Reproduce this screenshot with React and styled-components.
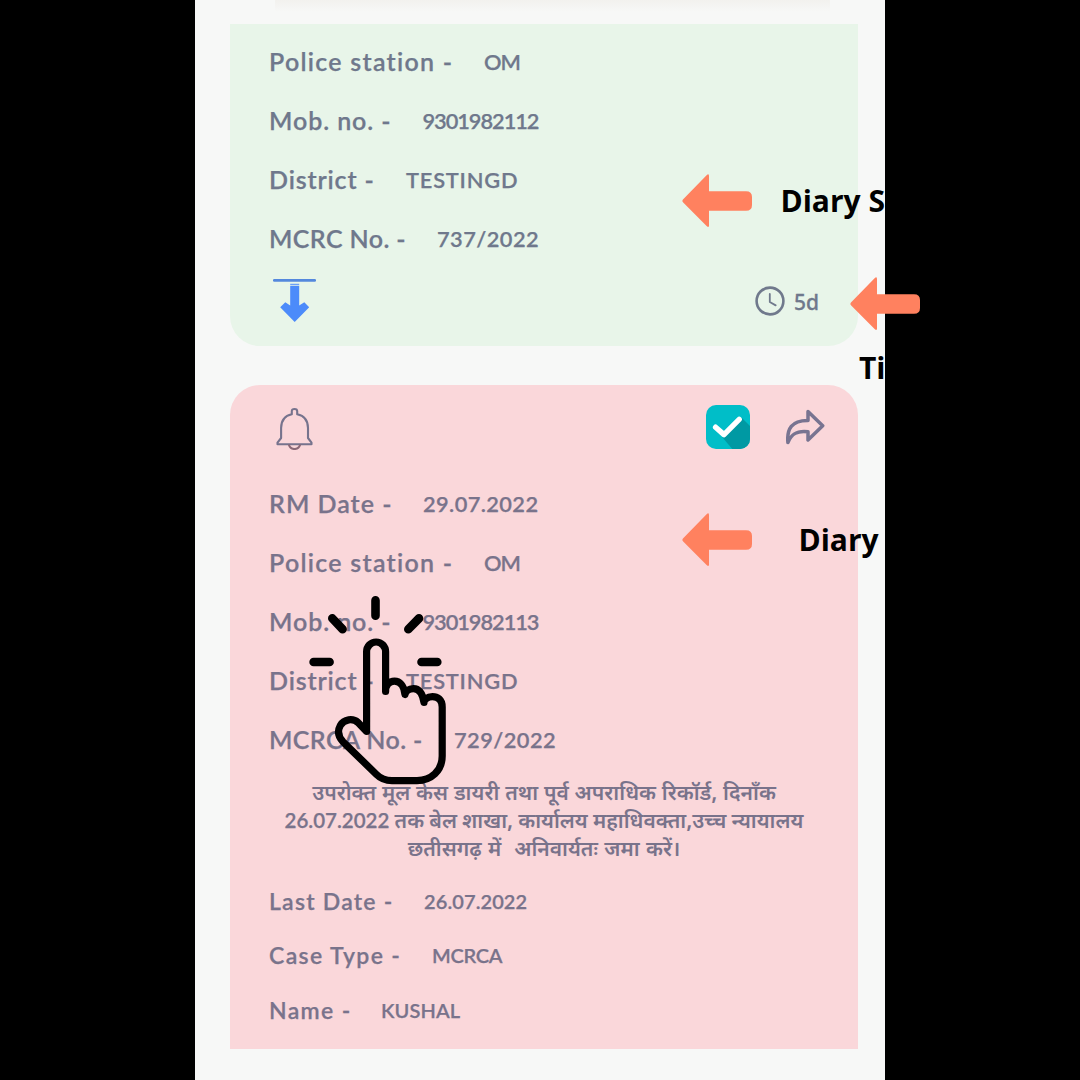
import React from "react";
import styled, { createGlobalStyle } from "styled-components";

const Global = createGlobalStyle`
  *, *::before, *::after { box-sizing: border-box; }
  html, body { margin: 0; background: #000; }
`;

const Stage = styled.div`
  position: relative;
  width: 1080px;
  height: 1080px;
  overflow: hidden;
  background: #000;
  display: flex;
  justify-content: center;
`;

const Phone = styled.main`
  position: relative;
  width: 690px;
  height: 1080px;
  overflow: hidden;
  background: #f7f8f7;
  padding: 0 27px 0 35px;
  display: flex;
  flex-direction: column;
  font-family: Lato, "Noto Sans", sans-serif;
  color: #73758f;
`;

const TopShade = styled.div`
  height: 12px;
  margin: 0 28px 12px 45px;
  flex: none;
  background: linear-gradient(#f2f1ee, #f7f8f7);
`;

const Card = styled.section`
  flex: none;
  height: ${(p) => p.$height}px;
  background: ${(p) => p.$bg};
  border-radius: ${(p) => p.$radius};
  padding: ${(p) => p.$pad};
  color: ${(p) => p.$ink};
  & + & { margin-top: 39px; }
`;

const Field = styled.div`
  display: flex;
  align-items: flex-start;
  height: ${(p) => (p.$small ? 54.4 : 59)}px;
  line-height: ${(p) => (p.$small ? 54.4 : 59)}px;
  white-space: pre;
`;

const Label = styled.span`
  width: ${(p) => p.$width}px;
  flex: none;
  font-size: ${(p) => (p.$small ? 23 : 25)}px;
  font-weight: 600;
  letter-spacing: ${(p) => p.$track}px;
  -webkit-text-stroke: 0.25px currentColor;
`;

const Value = styled.span`
  font-size: ${(p) => (p.$small ? 20 : 21.8)}px;
  font-weight: 600;
  letter-spacing: ${(p) => p.$track}px;
  -webkit-text-stroke: 0.25px currentColor;
`;

const CardHead = styled.header`
  height: 89px;
  padding: 0 33px 4px 7px;
  display: flex;
  align-items: center;
`;

const Actions = styled.div`
  margin-left: auto;
  display: flex;
  align-items: center;
  gap: 36px;
  padding-bottom: 1px;
`;

const CardFoot = styled.footer`
  height: 66px;
  padding: 0 39px 0 4px;
  display: flex;
  align-items: center;
  justify-content: space-between;
`;

const Age = styled.div`
  display: flex;
  align-items: center;
  gap: 9px;
  font: 500 21px/32px "Noto Sans", sans-serif;
`;

const AgeText = styled.span`
  padding-top: 2px;
  -webkit-text-stroke: 0.3px currentColor;
`;

const Notice = styled.p`
  margin: 12px 0 9px;
  padding-right: 39px;
  height: 84px;
  text-align: center;
  white-space: pre;
  font: 600 21px/28px "Noto Sans Devanagari", "Noto Sans", Lato, sans-serif;
`;

const NoticeLine = styled.span`
  display: block;
  height: 28px;
  word-spacing: ${(p) => p.$space}px;
`;

const NoticeDate = styled.span`
  font: 600 20.5px/20px Lato, sans-serif;
  -webkit-text-stroke: 0.25px currentColor;
`;

const Caption = styled.span`
  position: absolute;
  left: ${(p) => p.$x}px;
  top: ${(p) => p.$y}px;
  font: 700 30px/40px "Open Sans", sans-serif;
  white-space: pre;
  color: #000;
`;

const ArrowMark = styled.svg`
  position: absolute;
  left: ${(p) => p.$x}px;
  top: ${(p) => p.$y}px;
  width: 71px;
  height: 54px;
`;

const HandMark = styled.svg`
  position: absolute;
  left: 300px;
  top: 590px;
  width: 160px;
  height: 200px;
`;

const Arrow = ({ x, y }) => (
  <ArrowMark $x={x} $y={y} viewBox="0 0 71 54">
    <path
      fill="#ff815f"
      d="M1.2 25.2 24.6 1.2Q27 -.8 27 2V17.2H64Q70 17.2 70 23V31Q70 36.8 64 36.8H27V51.5Q27 54.1 24.6 52.1L1.2 28.6Q-.4 26.9 1.2 25.2Z"
    />
  </ArrowMark>
);

const Hand = () => (
  <HandMark viewBox="0 0 160 200" fill="none" stroke="#000" strokeLinecap="round" strokeLinejoin="round">
    <g strokeWidth="8.6">
      <path d="M75.5 10.4V25.8M32.3 28.4 42.6 39.2M119 28.4 108.3 39.2M13.6 72H29.6M121.5 72H137.3" />
    </g>
    <path
      strokeWidth="7.2"
      d="M85.6 101.5V61.8A9.5 9.8 0 0 0 66.6 61.8V141.5L58 132.5C53 128 44 129 40.3 135.5C37 141.5 38.8 147.3 43 151.8L76.5 184.5Q82.5 190.6 92 190.6H117C131 190.6 142.2 181 142.2 166V117C142.2 109 137 106.6 132.5 106.6C127 106.6 124 110 124 112.5C122.5 103 119 98.6 113.5 98.6C108.5 98.6 105.5 101.5 105 104.5C104 95 99.5 91.2 94.5 91.2C89.5 91.2 85.6 94.5 85.6 101.5"
    />
  </HandMark>
);

const Download = () => (
  <svg width="43" height="46" viewBox="0 0 43 46">
    <rect x="0" y="1" width="43" height="2.8" rx="1.3" fill="#5488dd" />
    <rect x="17.2" y="5.8" width="9" height="1" fill="#4c8bfa" />
    <path fill="#4c8bfa" d="M17.2 7.8H26.2V27.4L31.3 24.2 36.2 29.3 21.7 44 7.2 29.3 12.3 24.2 17.2 27.4Z" />
  </svg>
);

const Clock = () => (
  <svg width="30" height="30" viewBox="0 0 30 30" fill="none" stroke="#70798c" strokeLinecap="round" strokeLinejoin="round">
    <circle cx="15" cy="15" r="13.4" strokeWidth="2.6" />
    <path d="M14.8 8V16L20.7 19.4" strokeWidth="1.8" />
  </svg>
);

const Bell = () => (
  <svg width="38" height="45" viewBox="0 -2 38 45" fill="none" stroke="#76738d" strokeWidth="2.1" strokeLinejoin="round">
    <path d="M15.8 7.2V4.3Q15.8 2 18.5 2Q21.2 2 21.2 4.3V7.2C28.4 8.7 32 14 32 21V31L35.5 35.7V37.3H1.5V35.7L5.1 31V21C5.1 14 8.6 8.7 15.8 7.2Z" />
    <path d="M12.8 37.5Q14.2 42 18.5 42T24.2 37.5" stroke="#8a6876" />
  </svg>
);

const Check = () => (
  <svg width="44" height="44" viewBox="0 0 44 44">
    <defs>
      <clipPath id="tile"><rect width="44" height="44" rx="10" /></clipPath>
    </defs>
    <g clipPath="url(#tile)">
      <rect width="44" height="44" fill="#00bec8" />
      <path d="M36 13 46 23V46H28L16.5 32.5Z" fill="#0099a3" />
    </g>
    <path d="M9.6 22.2 18 29.6 33.2 14.4" fill="none" stroke="#fff" strokeWidth="5.4" strokeLinecap="round" strokeLinejoin="round" />
  </svg>
);

const Share = () => (
  <svg width="39" height="36" viewBox="0.5 0 39 36" fill="none" stroke="#787491" strokeWidth="3.5" strokeLinejoin="round">
    <path d="M22.5 2.5 37.2 16.8 22.5 31V22.8C12 21.5 6 24.5 2.4 33.5C1.2 20 6 11.2 22.5 11.4Z" />
  </svg>
);

const Row = ({ f: [label, width, lt, value, vt], small }) => (
  <Field $small={small}>
    <Label $small={small} $width={width} $track={lt}>{label}</Label>
    <Value $small={small} $track={vt}>{value}</Value>
  </Field>
);

// label, value column offset, label tracking, value, value tracking
const caseRows = [
  ["Police station -", 215, 1.27, "OM", -1],
  ["Mob. no. -", 153.5, 0.92, "9301982112", -1.05],
  ["District -", 137, 0.85, "TESTINGD", 0.8],
];
const greenRows = [...caseRows, ["MCRC No. -", 168, 0.4, "737/2022", 0.45]];
const pinkRows = [
  ["RM Date -", 154, 1, "29.07.2022", 0.4],
  caseRows[0],
  ["Mob. no. -", 153.5, 0.92, "9301982113", -1.05],
  caseRows[2],
  ["MCRCA No. -", 185, 0.4, "729/2022", 0.45],
];
const detailRows = [
  ["Last Date -", 155, 1.22, "26.07.2022", 0.1],
  ["Case Type -", 163, 1.35, "MCRCA", -0.3],
  ["Name -", 112, 1.35, "KUSHAL", 0.1],
];

export default function App() {
  return (
    <Stage>
      <Global />
      <Phone>
        <TopShade />
        <Card $height={322} $bg="#e8f5e9" $radius="0 0 30px 30px" $pad="8px 0 0 39px" $ink="#6f788c">
          {greenRows.map((f) => <Row key={f[0]} f={f} />)}
          <CardFoot>
            <Download />
            <Age><Clock /><AgeText>5d</AgeText></Age>
          </CardFoot>
        </Card>
        <Card $height={664} $bg="#fad7da" $radius="30px 30px 0 0" $pad="0 0 0 39px" $ink="#79738b">
          <CardHead>
            <Bell />
            <Actions><Check /><Share /></Actions>
          </CardHead>
          {pinkRows.map((f) => <Row key={f[0]} f={f} />)}
          <Notice>
            <NoticeLine $space={0.4}>उपरोक्त मूल केस डायरी तथा पूर्व अपराधिक रिकॉर्ड, दिनाँक</NoticeLine>
            <NoticeLine $space={-0.3}><NoticeDate>26.07.2022</NoticeDate> तक बेल शाखा, कार्यालय महाधिवक्ता,उच्च न्यायालय</NoticeLine>
            <NoticeLine $space={1}>छतीसगढ़ में  अनिवार्यतः जमा करें।</NoticeLine>
          </Notice>
          {detailRows.map((f) => <Row key={f[0]} f={f} small />)}
        </Card>
        <Caption $x={585.5} $y={181}>Diary S</Caption>
        <Caption $x={664} $y={348}>Ti</Caption>
        <Caption $x={603.5} $y={520}>Diary</Caption>
      </Phone>
      <Arrow x={682} y={174} />
      <Arrow x={850} y={277} />
      <Arrow x={682} y={513} />
      <Hand />
    </Stage>
  );
}
